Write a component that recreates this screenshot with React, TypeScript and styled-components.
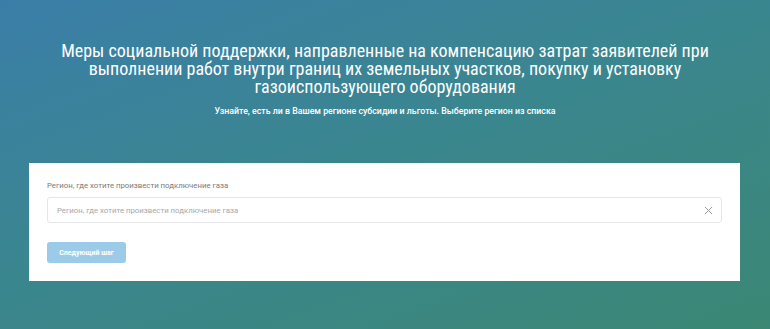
import React from "react";
import styled, { createGlobalStyle } from "styled-components";

const Global = createGlobalStyle`
  html, body { margin: 0; padding: 0; }
  body { font-family: Roboto, "Noto Sans", Arial, sans-serif; }
  * { box-sizing: border-box; }
`;

const Page = styled.div`
  width: 770px;
  height: 329px;
  overflow: hidden;
  background: linear-gradient(160deg, #3a7ea8 0%, #3a8690 45%, #3b8774 100%);
  display: flex;
  flex-direction: column;
  align-items: center;
  padding-top: 42px;
`;

const Title = styled.h1`
  margin: 0;
  color: #fff;
  font-family: "Liberation Sans Narrow", "Roboto Condensed", Roboto, sans-serif;
  font-weight: 400;
  font-size: 18px;
  line-height: 18px;
  text-align: center;
`;

const Subtitle = styled.p`
  margin: 9px 0 0;
  color: #fff;
  font-family: Roboto, sans-serif;
  font-weight: 500;
  font-size: 8.8px;
  line-height: 12px;
  text-align: center;
`;

const Card = styled.section`
  margin-top: 46px;
  width: 711px;
  align-self: flex-start;
  margin-left: 29px;
  background: #fff;
  padding: 18px;
  display: flex;
  flex-direction: column;
`;

const Label = styled.label`
  font-size: 7.8px;
  color: #7a7a7a;
  line-height: 10px;
`;

const Field = styled.div`
  margin-top: 6px;
  height: 26px;
  border: 1px solid #e4e6e8;
  border-radius: 3px;
  display: flex;
  align-items: center;
  padding: 0 9px;
  justify-content: space-between;
`;

const Placeholder = styled.span`
  font-size: 7.8px;
  color: #a8a8a8;
`;

const Clear = styled.span`
  display: flex;
  color: #9a9a9a;
  margin-right: -1px;
`;

const Button = styled.button`
  margin-top: 19px;
  width: 79px;
  height: 21px;
  border: none;
  border-radius: 3px;
  background: #9ccbe9;
  color: #fff;
  font-family: Roboto, sans-serif;
  font-weight: 700;
  font-size: 7px;
  padding: 0;
`;

export default function App() {
  return (
    <>
      <Global />
      <Page>
        <Title>
          Меры социальной поддержки, направленные на компенсацию затрат заявителей при
          <br />
          выполнении работ внутри границ их земельных участков, покупку и установку
          <br />
          газоиспользующего оборудования
        </Title>
        <Subtitle>
          Узнайте, есть ли в Вашем регионе субсидии и льготы. Выберите регион из списка
        </Subtitle>
        <Card>
          <Label>Регион, где хотите произвести подключение газа</Label>
          <Field>
            <Placeholder>Регион, где хотите произвести подключение газа</Placeholder>
            <Clear>
              <svg width="9" height="9" viewBox="0 0 10 10">
                <path d="M1 1L9 9M9 1L1 9" stroke="currentColor" strokeWidth="1.1" />
              </svg>
            </Clear>
          </Field>
          <Button>Следующий шаг</Button>
        </Card>
      </Page>
    </>
  );
}
